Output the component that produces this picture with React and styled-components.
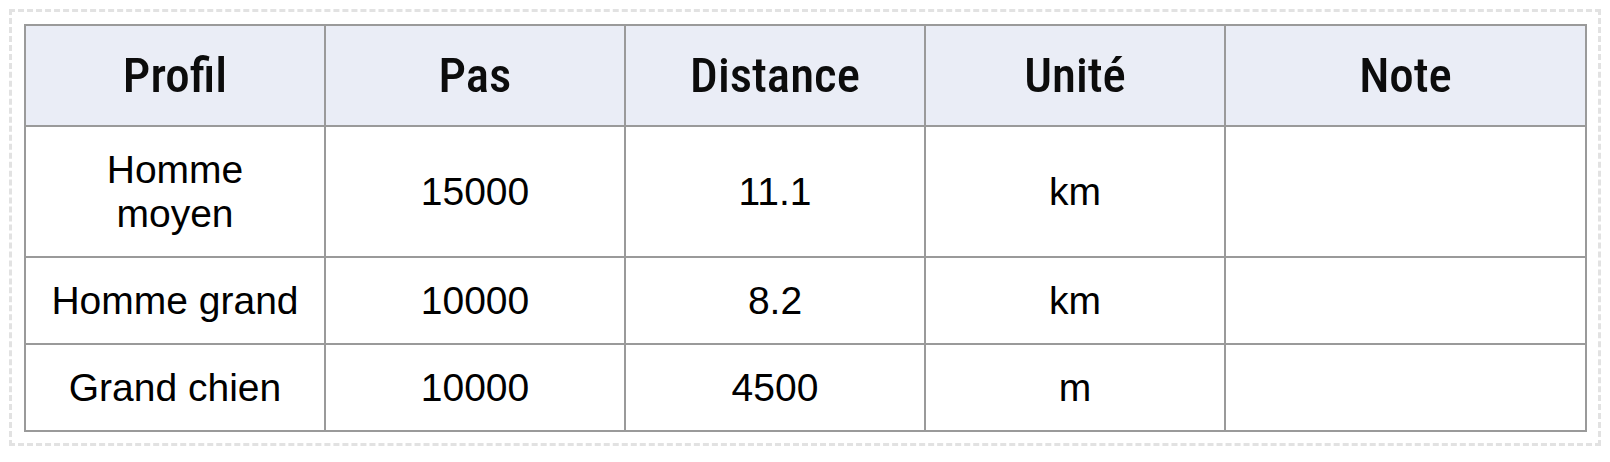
import React from 'react'
import styled, { createGlobalStyle } from 'styled-components'

const GlobalStyle = createGlobalStyle`
  html, body {
    margin: 0;
    padding: 0;
    background: #ffffff;
  }
`

const Frame = styled.div`
  display: inline-block;
  margin: 9px;
  padding: 12px 11px 11px 12px;
  border: 3px dashed #e2e2e2;
`

const Table = styled.table`
  width: 1561px;
  border-collapse: collapse;
  table-layout: fixed;
  border: 2px solid #9a9a9a;
`

const HeadCell = styled.th`
  height: 99px;
  padding: 0 20px;
  background: #eaedf6;
  border: 2px solid #9a9a9a;
  font-family: "Roboto Condensed", Roboto, "DejaVu Sans", sans-serif;
  font-weight: 500;
  font-size: 49px;
  color: #0c0c0c;
  text-align: center;
`

const Cell = styled.td`
  padding: 21px 20px 20px;
  border: 2px solid #9a9a9a;
  font-family: "Liberation Sans", Arial, sans-serif;
  font-size: 39px;
  color: #000;
  text-align: center;
  vertical-align: middle;
`

const columns = [
  { label: 'Profil', width: 300 },
  { label: 'Pas', width: 300 },
  { label: 'Distance', width: 300 },
  { label: 'Unité', width: 300 },
  { label: 'Note', width: 361 },
]

const rows = [
  ['Homme moyen', '15000', '11.1', 'km', ''],
  ['Homme grand', '10000', '8.2', 'km', ''],
  ['Grand chien', '10000', '4500', 'm', ''],
]

export default function App() {
  return (
    <>
      <GlobalStyle />
      <Frame>
        <Table>
          <colgroup>
            {columns.map(c => <col key={c.label} style={{ width: c.width }} />)}
          </colgroup>
          <thead>
            <tr>
              {columns.map(c => <HeadCell key={c.label}>{c.label}</HeadCell>)}
            </tr>
          </thead>
          <tbody>
            {rows.map((r, i) => (
              <tr key={i}>
                {r.map((v, j) => <Cell key={j}>{v}</Cell>)}
              </tr>
            ))}
          </tbody>
        </Table>
      </Frame>
    </>
  )
}
